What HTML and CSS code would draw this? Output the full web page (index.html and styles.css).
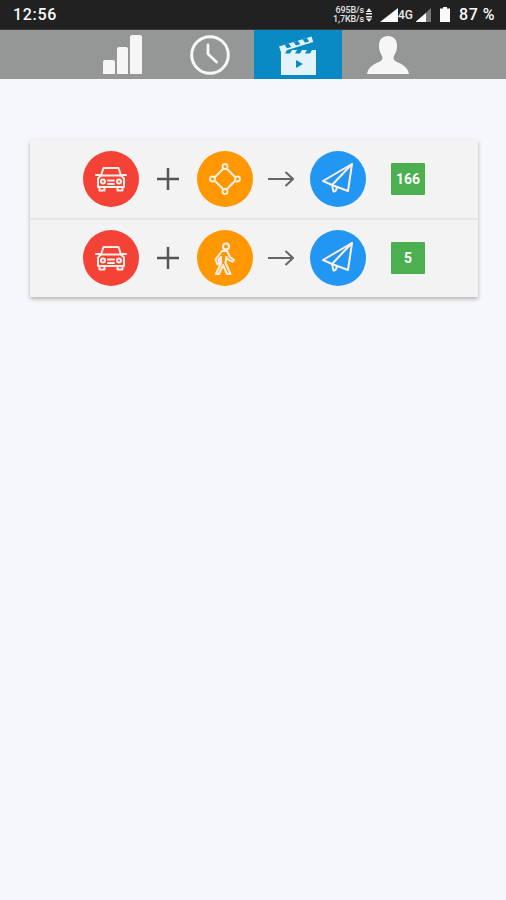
FILE: index.html
```html
<!DOCTYPE html>
<html lang="en">
<head>
<meta charset="utf-8">
<title>Rules</title>
<link rel="stylesheet" href="styles.css">
</head>
<body>
<header class="status">
  <span class="clock">12:56</span>
  <div class="status-right">
    <div class="speeds"><span>695B/s</span><span>1,7KB/s</span></div>
    <svg class="updown" viewBox="0 0 6 14" width="6" height="14"><path d="M3 0 6 4H0zM0 5h6v1.500H0zM0 8h6v1.500H0zM3 14 0 10.500H6z" fill="#e8e8e8"/></svg>
    <svg class="sig" viewBox="0 0 18 14" width="18" height="14"><path d="M18 0V14H0z" fill="#fafafa"/></svg>
    <span class="net">4G</span>
    <svg class="sig2" viewBox="0 0 15 14" width="15" height="14"><path d="M15 0V14H0z" fill="#777"/><path d="M10 5V14H0V13.500z" fill="#fafafa"/></svg>
    <svg class="batt" viewBox="0 0 10 15" width="10" height="15"><path d="M3 0H7V1.500H10V15H0V1.500H3z" fill="#fafafa"/></svg>
    <span class="pct">87 %</span>
  </div>
</header>

<nav class="tabs">
  <div class="tab">
    <svg viewBox="0 0 40 40" width="40" height="40"><path d="M1 27a2 2 0 0 1 2-2h8a2 2 0 0 1 2 2v12H1zM15 14a2 2 0 0 1 2-2h7a2 2 0 0 1 2 2v25H15zM28 2a2 2 0 0 1 2-2h8a2 2 0 0 1 2 2v37H28z" fill="#f6f6f6"/></svg>
  </div>
  <div class="tab">
    <svg viewBox="0 0 40 40" width="40" height="40"><circle cx="20" cy="20" r="18.300" fill="none" stroke="#f6f6f6" stroke-width="3"/><path d="M18 10v9l8.500 8" fill="none" stroke="#f6f6f6" stroke-width="2.800" stroke-linecap="round" stroke-linejoin="round"/></svg>
  </div>
  <div class="tab active">
    <svg viewBox="0 0 40 40" width="40" height="40">
      <path d="M3 15h35v25H3z" fill="#e3f3fa"/>
      <path d="M9 15h5l-2 3.500H7zM19 15h5l-2 3.500h-5zM29 15h5l-2 3.500h-5z" fill="#0a8ac4"/>
      <path d="M1 11.500 33.500 1.500l1.800 5.500L3 17z" fill="#e3f3fa"/>
      <path d="M6.500 9.800l4.300-1.300 2.500 3.500-4.300 1.300zM15.500 7l4.300-1.300 2.500 3.500-4.300 1.300zM24.500 4.300l4.300-1.300 2.500 3.500-4.300 1.300z" fill="#0a8ac4"/>
      <path d="M18 25l7 4-7 4z" fill="#0a8ac4"/>
    </svg>
  </div>
  <div class="tab">
    <svg class="person" viewBox="0 0 44 40" width="44" height="40"><path d="M22 1c5.500 0 9 3.500 9 9.500 0 4-1 7-2.800 10-1 1.800-1 3.800.8 5.300 3 2.500 12.500 4 14 13.200H1c1.500-9.200 11-10.700 14-13.200 1.800-1.500 1.800-3.500.8-5.300C14 17.500 13 14.500 13 10.500 13 4.500 16.500 1 22 1z" fill="#f6f6f6"/></svg>
  </div>
</nav>

<main class="page">
  <section class="card">
    <div class="row">
      <div class="circle red">
        <svg viewBox="0 0 34 34" width="34" height="34"><g class="line"><path d="M7 13.500l2.500-7.500h15l2.500 7.500"/><path d="M4 16.500 7 13.500h20l3 3v8.500H4z"/><path d="M5.500 25v3.500h5V25M23.500 25v3.500h5V25"/><circle cx="9" cy="19.500" r="2"/><circle cx="25" cy="19.500" r="2"/><path d="M14 18.500h6M14 22h6M2 13h3.500M28.500 13H32"/></g></svg>
      </div>
      <svg class="plus" viewBox="0 0 24 24" width="24" height="24"><path d="M12 1v22M1 12h22" stroke="#555" stroke-width="2.500" fill="none"/></svg>
      <div class="circle orange">
        <svg viewBox="0 0 34 34" width="34" height="34"><g class="line"><path d="M17 5 29 17 17 29 5 17z"/></g><circle class="node" cx="17" cy="4.500" r="2.500"/><circle class="node" cx="29.500" cy="17" r="2.500"/><circle class="node" cx="17" cy="29.500" r="2.500"/><circle class="node" cx="4.500" cy="17" r="2.500"/></svg>
      </div>
      <svg class="arrow" viewBox="0 0 26 18" width="26" height="18"><path d="M0 9h25M17.500 2 25 9 17.500 16" stroke="#666" stroke-width="2" fill="none"/></svg>
      <div class="circle blue">
        <svg viewBox="0 0 34 34" width="34" height="34"><g class="line"><path d="M31 2 2 19 11 23 27 29z"/><path d="M31 2 11 23 12.500 29.500Q15 30 16 25"/></g></svg>
      </div>
      <div class="badge">166</div>
    </div>
    <div class="row">
      <div class="circle red">
        <svg viewBox="0 0 34 34" width="34" height="34"><g class="line"><path d="M7 13.500l2.500-7.500h15l2.500 7.500"/><path d="M4 16.500 7 13.500h20l3 3v8.500H4z"/><path d="M5.500 25v3.500h5V25M23.500 25v3.500h5V25"/><circle cx="9" cy="19.500" r="2"/><circle cx="25" cy="19.500" r="2"/><path d="M14 18.500h6M14 22h6M2 13h3.500M28.500 13H32"/></g></svg>
      </div>
      <svg class="plus" viewBox="0 0 24 24" width="24" height="24"><path d="M12 1v22M1 12h22" stroke="#555" stroke-width="2.500" fill="none"/></svg>
      <div class="circle orange">
        <svg viewBox="0 0 34 34" width="34" height="34"><g class="line"><circle cx="18" cy="5.500" r="3"/><path d="M14 10h5l3 6 4 3-1.500 2-5-3-1-2-1 6 5 11h-3.500l-4-9-4 9H8l5-11v-6l-2.500 3 1 3-2 1.500-2-5z"/></g></svg>
      </div>
      <svg class="arrow" viewBox="0 0 26 18" width="26" height="18"><path d="M0 9h25M17.500 2 25 9 17.500 16" stroke="#666" stroke-width="2" fill="none"/></svg>
      <div class="circle blue">
        <svg viewBox="0 0 34 34" width="34" height="34"><g class="line"><path d="M31 2 2 19 11 23 27 29z"/><path d="M31 2 11 23 12.500 29.500Q15 30 16 25"/></g></svg>
      </div>
      <div class="badge">5</div>
    </div>
  </section>
</main>
</body>
</html>
```
FILE: styles.css
```css
* { box-sizing: border-box; }
html, body { margin: 0; height: 100%; }
body {
  width: 506px;
  height: 900px;
  overflow: hidden;
  background: #f5f7fb;
  font-family: "Roboto", "Liberation Sans", sans-serif;
  display: flex;
  flex-direction: column;
}
.status {
  height: 30px;
  background: #212121;
  border-bottom: 1px solid #3a3a3a;
  color: #fafafa;
  display: flex;
  align-items: center;
  justify-content: space-between;
  padding: 0 11px 0 13px;
  flex: none;
}
.clock { font-size: 16px; font-weight: 500; letter-spacing: 0.7px; }
.status-right { display: flex; align-items: center; }
.speeds {
  display: flex;
  flex-direction: column;
  align-items: flex-end;
  font-size: 9px;
  line-height: 9px;
  font-weight: 500;
  color: #e4e4e4;
  white-space: nowrap;
  letter-spacing: -0.1px;
}
.updown { margin-left: 2px; }
.sig { margin-left: 8px; }
.net { font-size: 12px; font-weight: 500; margin-right: 2px; letter-spacing: 0; color: #e8e8e8; }
.sig2 { margin-left: 1px; }
.batt { margin-left: 9px; }
.pct { font-size: 16px; font-weight: 500; margin-left: 9px; letter-spacing: 0.5px; }

.tabs {
  height: 49px;
  background: #959797;
  display: flex;
  padding-left: 78px;
  flex: none;
}
.tab {
  width: 88px;
  display: flex;
  align-items: center;
  justify-content: center;
}
.tab.active { background: #0a8ac4; }
.person { margin-left: 4px; }

.page { flex: 1; padding: 61px 28px 0 30px; }
.card {
  background: #f3f3f3;
  box-shadow: 0 2px 4px rgba(0, 0, 0, 0.28);
  padding-bottom: 1px;
}
.row {
  height: 78px;
  display: flex;
  align-items: center;
  padding-left: 53px;
}
.row + .row { border-top: 2px solid #e6e6e6; }
.circle {
  width: 56px;
  height: 56px;
  border-radius: 50%;
  display: flex;
  align-items: center;
  justify-content: center;
  flex: none;
}
.red { background: #f44336; }
.orange { background: #ff9800; }
.blue { background: #2196f3; }
.line { fill: none; stroke: #fdefe9; stroke-width: 2; stroke-linejoin: round; stroke-linecap: round; }
.node { fill: #ff9800; stroke: #fdf0e0; stroke-width: 1.800; }
.plus { margin: 0 17px; flex: none; }
.arrow { margin: 0 16px 0 15px; flex: none; }
.badge {
  width: 34px;
  height: 32px;
  margin-left: 25px;
  background: #4caf50;
  border-radius: 1px;
  color: #fff;
  font-size: 14px;
  font-weight: 700;
  display: flex;
  align-items: center;
  justify-content: center;
}
```
